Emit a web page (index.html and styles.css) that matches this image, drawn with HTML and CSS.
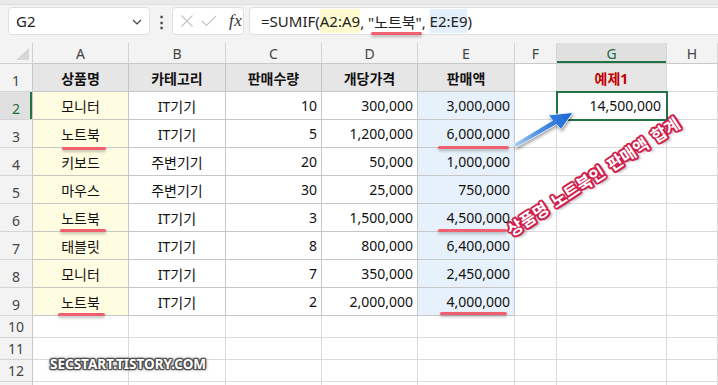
FILE: index.html
```html
<!DOCTYPE html>
<html lang="ko">
<head>
<meta charset="utf-8">
<link rel="stylesheet" href="styles.css">
</head>
<body>
<div class="app">
  <div class="topstrip"></div>
  <div class="fbar">
    <div class="namebox"><span>G2</span>
      <svg class="chev" width="10" height="6" viewBox="0 0 10 6"><path d="M1 1 L5 5 L9 1" fill="none" stroke="#444" stroke-width="1.2"/></svg>
    </div>
    <div class="dots">⋮</div>
    <div class="fxbox">
      <svg width="14" height="14" viewBox="0 0 14 14"><path d="M1.5 1.5 L12.5 12.5 M12.5 1.5 L1.5 12.5" stroke="#c4c4c4" stroke-width="1.1" fill="none"/></svg>
      <svg width="16" height="12" viewBox="0 0 16 12"><path d="M1 6 L5.5 10.5 L15 1" stroke="#c4c4c4" stroke-width="1.1" fill="none"/></svg>
      <span class="fx">fx</span>
    </div>
    <div class="formula">=SUMIF(<span class="hl-y">A2:A9</span>, "노트북", <span class="hl-b">E2:E9</span>)</div>
  </div>
  <div class="sheet">
    <div class="corner"><div class="tri"></div></div>
    <div class="ch">A</div><div class="ch">B</div><div class="ch">C</div><div class="ch">D</div><div class="ch">E</div><div class="ch">F</div><div class="ch sel">G</div><div class="ch">H</div>

    <div class="rh">1</div>
    <div class="c t hd">상품명</div><div class="c t hd">카테고리</div><div class="c t hd">판매수량</div><div class="c t hd">개당가격</div><div class="c t hd">판매액</div><div class="c"></div><div class="c hd g1">예제1</div><div class="c"></div>

    <div class="rh rsel">2</div>
    <div class="c t y">모니터</div><div class="c t">IT기기</div><div class="c t n">10</div><div class="c t n">300,000</div><div class="c t n bl">3,000,000</div><div class="c"></div><div class="c n active">14,500,000</div><div class="c"></div>

    <div class="rh">3</div>
    <div class="c t y">노트북</div><div class="c t">IT기기</div><div class="c t n">5</div><div class="c t n">1,200,000</div><div class="c t n bl">6,000,000</div><div class="c"></div><div class="c"></div><div class="c"></div>

    <div class="rh">4</div>
    <div class="c t y">키보드</div><div class="c t">주변기기</div><div class="c t n">20</div><div class="c t n">50,000</div><div class="c t n bl">1,000,000</div><div class="c"></div><div class="c"></div><div class="c"></div>

    <div class="rh">5</div>
    <div class="c t y">마우스</div><div class="c t">주변기기</div><div class="c t n">30</div><div class="c t n">25,000</div><div class="c t n bl">750,000</div><div class="c"></div><div class="c"></div><div class="c"></div>

    <div class="rh">6</div>
    <div class="c t y">노트북</div><div class="c t">IT기기</div><div class="c t n">3</div><div class="c t n">1,500,000</div><div class="c t n bl">4,500,000</div><div class="c"></div><div class="c"></div><div class="c"></div>

    <div class="rh">7</div>
    <div class="c t y">태블릿</div><div class="c t">IT기기</div><div class="c t n">8</div><div class="c t n">800,000</div><div class="c t n bl">6,400,000</div><div class="c"></div><div class="c"></div><div class="c"></div>

    <div class="rh">8</div>
    <div class="c t y">모니터</div><div class="c t">IT기기</div><div class="c t n">7</div><div class="c t n">350,000</div><div class="c t n bl">2,450,000</div><div class="c"></div><div class="c"></div><div class="c"></div>

    <div class="rh">9</div>
    <div class="c t y">노트북</div><div class="c t">IT기기</div><div class="c t n">2</div><div class="c t n">2,000,000</div><div class="c t n bl">4,000,000</div><div class="c"></div><div class="c"></div><div class="c"></div>

    <div class="rh">10</div>
    <div class="c"></div><div class="c"></div><div class="c"></div><div class="c"></div><div class="c"></div><div class="c"></div><div class="c"></div><div class="c"></div>
    <div class="rh">11</div>
    <div class="c"></div><div class="c"></div><div class="c"></div><div class="c"></div><div class="c"></div><div class="c"></div><div class="c"></div><div class="c"></div>
    <div class="rh">12</div>
    <div class="c"></div><div class="c"></div><div class="c"></div><div class="c"></div><div class="c"></div><div class="c"></div><div class="c"></div><div class="c"></div>
    <div class="rh"></div>
    <div class="c"></div><div class="c"></div><div class="c"></div><div class="c"></div><div class="c"></div><div class="c"></div><div class="c"></div><div class="c"></div>
  </div>

  <div class="uline u-f"></div>
  <div class="uline u-a3"></div>
  <div class="uline u-a6"></div>
  <div class="uline u-a9"></div>
  <div class="uline u-e3"></div>
  <div class="uline u-e6"></div>
  <div class="uline u-e9"></div>

  <svg class="arrow" width="90" height="60" viewBox="0 0 90 60">
    <defs>
      <linearGradient id="ag" x1="15" y1="46" x2="72" y2="13" gradientUnits="userSpaceOnUse">
        <stop offset="0" stop-color="#a9cdf4"/>
        <stop offset="0.4" stop-color="#4f93e4"/>
        <stop offset="1" stop-color="#1764d6"/>
      </linearGradient>
    </defs>
    <polygon points="73,12.5 48.5,15 52.5,20.5 13.5,44 16,47.5 56.5,24.5 61,29.5" fill="url(#ag)" stroke="#ffffff" stroke-width="0.8" stroke-linejoin="round"/>
  </svg>

  <div class="callout">상품명 노트북인 판매액 합계</div>
  <div class="wm">SECSTART.TISTORY.COM</div>
</div>
</body>
</html>
```

FILE: styles.css
```css
* { box-sizing: border-box; }
html, body { margin: 0; padding: 0; background: #ffffff; }
.app {
  position: relative;
  width: 718px;
  height: 385px;
  overflow: hidden;
  background: #f3f3f3;
  font-family: "Noto Sans", "Noto Sans CJK KR", sans-serif;
  color: #1e1e1e;
}
.topstrip {
  height: 5px;
  background: #e9e9e9;
  border-bottom: 1px solid #dedede;
}
.fbar {
  display: flex;
  align-items: stretch;
  height: 28px;
  margin-top: 2px;
  padding-left: 8px;
}
.namebox {
  width: 142px;
  background: #fff;
  border: 1px solid #e0e0e0;
  border-radius: 4px;
  display: flex;
  align-items: center;
  justify-content: space-between;
  padding: 0 7px 0 7px;
  font-size: 15px;
  color: #222;
}
.chev { margin-top: 1px; }
.dots {
  width: 22px;
  display: flex;
  align-items: center;
  justify-content: center;
  font-size: 15px;
  font-weight: bold;
  color: #444;
}
.fxbox {
  width: 72px;
  background: #fff;
  border: 1px solid #e0e0e0;
  border-radius: 4px;
  display: flex;
  align-items: center;
  padding-left: 7px;
  gap: 7px;
}
.fx {
  font-family: "Liberation Serif", serif;
  font-style: italic;
  font-size: 17px;
  color: #333;
  margin-left: 5px;
  letter-spacing: 0.5px;
}
.formula {
  flex: 1;
  margin-left: 5px;
  background: #fff;
  border: 1px solid #e0e0e0;
  border-right: none;
  border-radius: 4px 0 0 4px;
  display: flex;
  align-items: center;
  padding-left: 11px;
  font-size: 15px;
  color: #222;
  white-space: pre;
}
.hl-y { background: #fffbcf; align-self: stretch; display: flex; align-items: center; margin: 1px 0; }
.hl-b { background: #e3effb; align-self: stretch; display: flex; align-items: center; margin: 1px 0; }

.sheet {
  margin-top: 8px;
  display: grid;
  grid-template-columns: 33px 96px 97px 96px 96px 97px 42px 110px 1fr;
  grid-template-rows: 21px repeat(9, 28px) repeat(4, 22px);
  background: #fff;
}
.corner {
  background: #f3f3f3;
  border-right: 1px solid #d0d0d0;
  border-bottom: 1px solid #d0d0d0;
  position: relative;
}
.tri {
  position: absolute;
  right: 3px;
  bottom: 3px;
  width: 0;
  height: 0;
  border-left: 13px solid transparent;
  border-bottom: 12px solid #d6d6d6;
}
.ch {
  background: #f3f3f3;
  border-right: 1px solid #d4d4d4;
  border-bottom: 1px solid #c8c8c8;
  display: flex;
  align-items: center;
  justify-content: center;
  font-size: 14px;
  color: #444;
}
.ch.sel {
  background: #e0e0e0;
  color: #1f6b3f;
  box-shadow: inset 0 -2px 0 #217346;
}
.rh {
  background: #f3f3f3;
  border-right: 1px solid #c8c8c8;
  border-bottom: 1px solid #d4d4d4;
  display: flex;
  align-items: flex-end;
  justify-content: center;
  padding-bottom: 1px;
  font-size: 14px;
  color: #444;
}
.rh.rsel {
  background: #e0e0e0;
  color: #1f6b3f;
  box-shadow: inset -2px 0 0 #217346;
}
.c {
  border-right: 1px solid #dadada;
  border-bottom: 1px solid #dadada;
  display: flex;
  align-items: center;
  justify-content: center;
  font-size: 14px;
  color: #111;
  white-space: nowrap;
}
.c.t { border-color: #c6c6c6; }
.c.hd { background: #e7e6e6; font-weight: bold; }
.c.g1 { color: #c00000; }
.c.y { background: #fffde1; }
.c.bl { background: #e7f1fb; }
.c.n { justify-content: flex-end; padding-right: 4px; }
.c.active {
  outline: 2px solid #217346;
  outline-offset: -1px;
  position: relative;
  z-index: 2;
  padding-right: 5px;
}

.uline {
  position: absolute;
  height: 3px;
  border-radius: 2px;
  background: #f0606e;
  box-shadow: 0 2px 3px rgba(0, 0, 0, 0.25);
  z-index: 3;
}
.u-f { left: 371px; top: 32px; width: 51px; }
.u-a3 { left: 62px; top: 147px; width: 44px; }
.u-a6 { left: 60px; top: 229px; width: 46px; }
.u-a9 { left: 58px; top: 313px; width: 47px; }
.u-e3 { left: 438px; top: 146px; width: 71px; }
.u-e6 { left: 438px; top: 229px; width: 69px; }
.u-e9 { left: 440px; top: 312px; width: 67px; }

.arrow {
  position: absolute;
  left: 500px;
  top: 100px;
  z-index: 4;
  filter: drop-shadow(1px 2px 1.5px rgba(0, 0, 0, 0.35));
}

.callout {
  position: absolute;
  left: 593px;
  top: 176px;
  transform: translate(-50%, -50%) rotate(-33deg);
  white-space: nowrap;
  font-family: "Noto Sans CJK KR", sans-serif;
  font-weight: bold;
  font-size: 16.5px;
  word-spacing: 2px;
  color: #ffffff;
  z-index: 5;
  text-shadow:
    2px 0 0 #cf1d4c, -2px 0 0 #cf1d4c, 0 2px 0 #cf1d4c, 0 -2px 0 #cf1d4c,
    1.5px 1.5px 0 #cf1d4c, -1.5px -1.5px 0 #cf1d4c, 1.5px -1.5px 0 #cf1d4c, -1.5px 1.5px 0 #cf1d4c,
    2px 3px 3px rgba(0, 0, 0, 0.45);
}

.wm {
  position: absolute;
  left: 50px;
  top: 355px;
  font-family: "Noto Sans", sans-serif;
  font-weight: bold;
  font-size: 13.5px;
  color: #ffffff;
  z-index: 5;
  text-shadow:
    1px 0 1px #4a4a4a, -1px 0 1px #4a4a4a, 0 1px 1px #4a4a4a, 0 -1px 1px #4a4a4a,
    1px 1px 1px #4a4a4a, -1px -1px 1px #4a4a4a, 1px -1px 1px #4a4a4a, -1px 1px 1px #4a4a4a,
    0 0 4px rgba(0, 0, 0, 0.6);
}
```
